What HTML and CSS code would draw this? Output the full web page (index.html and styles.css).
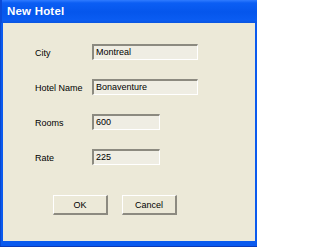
FILE: index.html
```html
<!DOCTYPE html>
<html>
<head>
<meta charset="utf-8">
<link rel="stylesheet" href="styles.css">
</head>
<body>
<div class="window">
  <div class="titlebar"><span class="title">New Hotel</span></div>
  <div class="client">
    <div class="form">
      <label class="label">City</label>
      <div class="field wide">Montreal</div>
      <label class="label">Hotel Name</label>
      <div class="field wide">Bonaventure</div>
      <label class="label">Rooms</label>
      <div class="field narrow">600</div>
      <label class="label">Rate</label>
      <div class="field narrow">225</div>
    </div>
    <div class="buttons">
      <button class="btn">OK</button>
      <button class="btn">Cancel</button>
    </div>
  </div>
</div>
</body>
</html>
```
FILE: styles.css
```css
html, body {
  margin: 0;
  padding: 0;
  background: #FFFFFF;
}
.window {
  width: 257px;
  height: 247px;
  box-sizing: border-box;
  display: flex;
  flex-direction: column;
  background: #0A5AEE;
  box-shadow: inset 0 -1px 0 #0A3AB8, inset 1px 0 0 #0848D0;
  font-family: "Liberation Sans", Arial, sans-serif;
}
.titlebar {
  height: 23px;
  flex: none;
  display: flex;
  align-items: center;
  padding-left: 7px;
  background: linear-gradient(to bottom, #2F7BFF 0px, #0B5EF4 3px, #0556EC 12px, #0A5CF2 20px, #0B55E0 23px);
  box-shadow: inset 2px 0 0 #0A4AD8;
}
.title {
  color: #FFFFFF;
  font-weight: bold;
  font-size: 11.5px;
  letter-spacing: 0.2px;
  padding-bottom: 1px;
}
.client {
  flex: 1;
  background: #ECE9D8;
  margin: 0 2px 6px 3px;
  display: flex;
  flex-direction: column;
  padding: 21px 0 0 32px;
}
.form {
  display: grid;
  grid-template-columns: 57px auto;
  grid-auto-rows: 16px;
  row-gap: 19px;
  align-items: center;
}
.label {
  font-size: 9px;
  color: #000;
  padding-top: 2px;
}
.field {
  box-sizing: border-box;
  height: 16px;
  border-top: 2px solid #8C8A80;
  border-left: 2px solid #8C8A80;
  border-right: 1px solid #FFFFFF;
  border-bottom: 1px solid #FFFFFF;
  background: #EFEDE3;
  font-size: 9px;
  color: #000;
  padding: 1px 0 0 2px;
  line-height: 11px;
}
.wide { width: 106px; }
.narrow { width: 68px; }
.buttons {
  display: flex;
  gap: 14px;
  margin-top: 30px;
  padding-left: 18px;
}
.btn {
  box-sizing: border-box;
  width: 55px;
  height: 20px;
  background: #ECE9D8;
  border: none;
  border-top: 1px solid #FFFFFF;
  border-left: 1px solid #FFFFFF;
  border-right: 2px solid #8C8A80;
  border-bottom: 2px solid #8C8A80;
  font-family: "Liberation Sans", Arial, sans-serif;
  font-size: 9px;
  color: #000;
  padding: 0;
  margin: 0;
}
```
